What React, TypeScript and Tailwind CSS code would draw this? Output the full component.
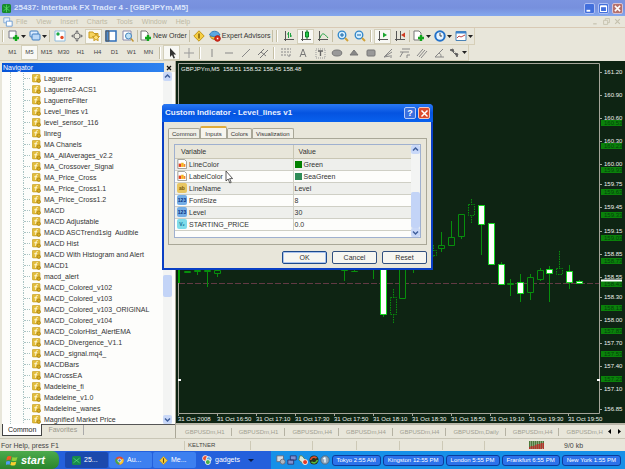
import type { ReactNode } from 'react';

const indicators = [
    'Laguerre', 'Laguerre2-ACS1', 'LaguerreFilter', 'Level_lines v1', 'level_sensor_116', 'linreg', 'MA Chanels',
    'MA_AllAverages_v2.2', 'MA_Crossover_Signal', 'MA_Price_Cross', 'MA_Price_Cross1.1', 'MA_Price_Cross1.2', 'MACD',
    'MACD Adjustable', 'MACD ASCTrend1sig  Audible', 'MACD Hist', 'MACD With Histogram and Alert', 'MACD1', 'macd_alert',
    'MACD_Colored_v102', 'MACD_Colored_v103', 'MACD_Colored_v103_ORIGINAL', 'MACD_Colored_v104', 'MACD_ColorHist_AlertEMA',
    'MACD_Divergence_V1.1', 'MACD_signal.mq4_', 'MACDBars', 'MACrossEA', 'Madeleine_fi', 'Madeleine_v1.0', 'Madeleine_wanes',
    'Magnified Market Price',
];

const inputs = [
    { name: 'LineColor', value: 'Green', type: 'color', swatch: 'bg-[#008000]' },
    { name: 'LabelColor', value: 'SeaGreen', type: 'color', swatch: 'bg-[#2e8b57]' },
    { name: 'LineName', value: 'Level', type: 'ab' },
    { name: 'FontSize', value: '8', type: '123' },
    { name: 'Level', value: '30', type: '123' },
    { name: 'STARTING_PRICE', value: '0.0', type: 'v2' },
];

const prices: [string, number][] = [
    ['161.20', 11], ['160.90', 34], ['160.60', 57], ['160.30', 80], ['160.00', 103], ['159.75', 123], ['159.45', 146], ['159.15', 170],
    ['158.85', 193], ['158.55', 216], ['158.30', 236], ['158.00', 259], ['157.70', 282], ['157.40', 305], ['157.10', 328], ['156.85', 348],
];

const levels: [string, number][] = [
    ['160.53', 62], ['160.23', 85], ['159.93', 109], ['159.63', 131], ['159.33', 154], ['159.03', 177],
    ['158.73', 200], ['158.43', 223], ['158.13', 247], ['157.83', 270], ['157.53', 293], ['157.23', 318],
];

const times = ['2008', '16:50', '17:10', '17:30', '17:50', '18:10', '18:30', '18:50', '19:10', '19:30', '19:50'];

// x, high, low, body top, body bottom, kind
type Candle = [number, number, number, number, number, 'up' | 'down' | 'dash'];
const candles: Candle[] = [
    [11, 211, 211, 210, 211, 'up'], [21, 205, 214, 209, 210, 'up'], [31, 205, 226, 209, 210, 'up'], [41, 205, 216, 209, 212, 'up'],
    [168, 205, 220, 209, 209, 'up'], [178, 205, 210, 210, 210, 'up'], [197, 205, 218, 205, 205, 'up'],
    [207, 200, 256, 205, 253, 'down'], [217, 228, 263, 236, 253, 'dash'], [226, 200, 237, 205, 237, 'up'], [237, 200, 212, 205, 205, 'up'],
    [257, 184, 196, 189, 194, 'dash'], [265, 171, 191, 184, 187, 'up'], [275, 160, 184, 176, 184, 'up'], [285, 153, 178, 153, 175, 'up'],
    [295, 138, 162, 143, 154, 'dash'], [305, 144, 194, 144, 163, 'down'], [315, 162, 203, 162, 203, 'down'],
    [325, 201, 224, 203, 223, 'down'], [334, 218, 235, 222, 223, 'up'], [344, 213, 241, 221, 232, 'down'],
    [354, 213, 239, 216, 231, 'up'], [364, 207, 220, 209, 218, 'up'], [373, 205, 241, 208, 212, 'down'],
    [383, 190, 213, 207, 213, 'dash'], [393, 204, 228, 210, 221, 'down'], [403, 219, 223, 220, 222, 'down'],
];

const clocks = ['Tokyo 2:55 AM', 'Kingston 12:55 PM', 'London 5:55 PM', 'Frankfurt 6:55 PM', 'New York 1:55 PM'];

function Icon({ children, className = 'size-[12px]' }: { children: ReactNode; className?: string }) {
    return <svg viewBox="0 0 12 12" fill="none" stroke="#555" className={`${className} shrink-0`} aria-hidden="true">{children}</svg>;
}

function Tool({ label, pressed, caret, children }: { label: string; pressed?: boolean; caret?: boolean; children: ReactNode }) {
    return (
        <button aria-label={label} className={`flex h-[15px] shrink-0 items-center justify-center ${caret ? 'w-[21px] gap-px' : 'w-[17px]'} ${pressed ? 'border border-[#d3cfba] bg-[#f8f8f4]' : ''}`}>
            <Icon>{children}</Icon>
            {caret && <svg viewBox="0 0 5 3" className="h-[3px] w-[5px]"><path d="M0 0h5L2.500 3z" fill="#222" /></svg>}
        </button>
    );
}

const Sep = () => <span className="mx-px h-3 w-px shrink-0 bg-[#c5bfa5]" />;
const Grip = () => <span className="mx-[2px] h-3 w-[2px] shrink-0 border-l border-[#c5bfa5] bg-white" />;

const plus = <path d="M8 5v6M5 8h6" stroke="#12a51c" strokeWidth="2.400" />;
const axes = <path d="M2.500 1v10M1 9.500h10" stroke="#555" />;

function IndicatorIcon() {
    return (
        <Icon className="size-[9px]">
            <rect x="0.500" y="0.500" width="10" height="10" rx="1" fill="#e3bd3c" stroke="#c79f22" />
            <path d="M7.500 2C5 1.500 5.500 5 4.500 9M3 5h4" stroke="#fffbe0" strokeWidth="1.300" />
            <circle cx="9" cy="9" r="2.300" fill="#d9ad22" stroke="#a67f10" />
        </Icon>
    );
}

function VarIcon({ type }: { type: string }) {
    if (type === 'color') {
        return (
            <Icon className="size-[10px]">
                <path d="M1 .5h8l2.500 2.500v8.500H1z" fill="#fff" stroke="#8c8c84" />
                <path d="M2 5.500h3v4H2z" fill="#e33f22" stroke="none" /><path d="M5 4.500h3v5H5z" fill="#f4b51d" stroke="none" /><path d="M8 6h2v3.500H8z" fill="#f4862d" stroke="none" />
            </Icon>
        );
    }
    const box = type === 'ab' ? 'bg-[#e8c662] text-[#765607]' : type === '123' ? 'bg-[#75aee6] text-[#0c2f7d]' : 'bg-[#7fdcea] text-[#136f93]';
    return <span className={`flex size-[10px] shrink-0 items-center justify-center rounded-[2px] text-[5px] leading-none font-bold ${box}`}>{type === 'v2' ? 'V₂' : type}</span>;
}

function Chevron({ up }: { up?: boolean }) {
    return <svg viewBox="0 0 9 9" className="size-[9px]" fill="none" stroke="#40609c" strokeWidth="1.500"><path d={up ? 'M2 5.500 4.500 3 7 5.500' : 'M2 3.500 4.500 6 7 3.500'} /></svg>;
}

function ScrollBar({ thumb }: { thumb: string }) {
    return (
        <div className="flex w-[9px] shrink-0 flex-col bg-[#f3f4f3]">
            <button aria-label="Scroll up" className="rounded-[2px] bg-[#c9d8f8]"><Chevron up /></button>
            <div className="flex flex-1 flex-col"><span className={thumb} /></div>
            <button aria-label="Scroll down" className="rounded-[2px] bg-[#c9d8f8]"><Chevron /></button>
        </div>
    );
}

function TitleBar() {
    return (
        <header className="flex h-4 shrink-0 items-center gap-[3px] bg-linear-to-b from-[#7b94e0] via-[#7790dd] to-[#84a8ee] px-[2px]">
            <Icon className="size-[9px]"><rect width="12" height="12" rx="2" fill="#178a2d" stroke="none" /><path d="m2 3 8 6M2 9l8-6M6 1v10" stroke="#58df69" /></Icon>
            <h1 className="flex-1 text-[8px] leading-none font-bold whitespace-nowrap text-[#dbe5fb]">25437: Interbank FX Trader 4 - [GBPJPYm,M5]</h1>
            <div className="flex gap-[3px]">
                <button aria-label="Minimize" className="size-[11px] rounded-[2px] border border-[#aebff3] bg-[#426fdc]"><Icon className="size-[9px]"><path d="M2 9h5" stroke="#fff" strokeWidth="2.500" /></Icon></button>
                <button aria-label="Maximize" className="size-[11px] rounded-[2px] border border-[#aebff3] bg-[#426fdc]"><Icon className="size-[9px]"><path d="M2 3h8v7H2z" stroke="#fff" strokeWidth="1.500" /><path d="M2 3h8" stroke="#fff" strokeWidth="2.500" /></Icon></button>
                <button aria-label="Close" className="size-[11px] rounded-[2px] border border-[#d9c3d3] bg-[#b5716c]"><Icon className="size-[9px]"><path d="m2.500 2.500 7 7m0-7-7 7" stroke="#fff" strokeWidth="2" /></Icon></button>
            </div>
        </header>
    );
}

function MenuBar() {
    return (
        <nav className="flex h-3 shrink-0 items-center gap-[9px] border-b border-[#d8c9b4] pr-1 pl-[3px] text-[7px] leading-none text-[#bdb9a4]">
            <Icon className="-mr-[6px] size-[10px]"><path d="M1 1h7v6H1z" fill="#eaf3ff" stroke="#7ba4d4" /><path d="M4 5h7v6H4z" fill="#fff" stroke="#5d93cf" /></Icon>
            {['File', 'View', 'Insert', 'Charts', 'Tools', 'Window', 'Help'].map(m => <button key={m}>{m}</button>)}
            <div className="ml-auto flex gap-1 text-[#c9c5b0]">
                <button aria-label="Minimize chart"><Icon className="size-[7px]"><path d="M2 10h6" stroke="#c5c1ae" strokeWidth="2" /></Icon></button>
                <button aria-label="Restore chart"><Icon className="size-[7px]"><path d="M1 4h7v7H1zM4 4V1h7v7H8" stroke="#c5c1ae" strokeWidth="1.500" /></Icon></button>
                <button aria-label="Close chart"><Icon className="size-[7px]"><path d="m2 2 8 8m0-8-8 8" stroke="#c5c1ae" strokeWidth="2" /></Icon></button>
            </div>
        </nav>
    );
}

function StandardBar() {
    return (
        <div className="flex h-[17px] shrink-0 items-center self-start border-r border-b border-[#d6cfb8] text-[7px]">
            <Grip />
            <Tool label="New chart" caret><path d="M1 1h7v7H1z" fill="#fff" stroke="#778" />{plus}</Tool>
            <Tool label="Profiles" caret><rect x="1" y="1" width="8" height="6" rx="1" fill="#dcecff" stroke="#3f7dc0" /><rect x="3" y="4" width="8" height="6" rx="1" fill="#bcd8f6" stroke="#3f7dc0" /></Tool>
            <Sep />
            <Tool label="Market watch"><path d="M1 1h10v10H1z" fill="#fff" stroke="#8ebadc" /><circle cx="4" cy="4" r="1.700" fill="#1ba845" stroke="none" /><circle cx="8" cy="7.500" r="1.700" fill="#e64b25" stroke="none" /></Tool>
            <Tool label="Data window"><path d="M6 0 4 2.500h4zM6 12l-2-2.500h4zM0 6l2.500-2v4zM12 6 9.500 4v4z" fill="#777" stroke="none" /><circle cx="6" cy="6" r="3" stroke="#777" /></Tool>
            <Tool label="Navigator" pressed><path d="M1 2h4l1 1.500h4V8H1z" fill="#f6d460" stroke="#c99a20" /><path d="m8 4 1.200 2.200 2.300.3-1.700 1.700.4 2.400L8 9.500l-2.200 1.100.4-2.400-1.700-1.700 2.300-.3z" fill="#ffe178" stroke="#c99a20" /></Tool>
            <Tool label="Terminal"><path d="M1 1h10v10H1z" fill="#fff" stroke="#2f6fb9" strokeWidth="1.500" /><path d="M1 1h3v10H1z" fill="#4b8bd0" /></Tool>
            <Tool label="Strategy tester"><path d="M1 1h8v9H1z" fill="#fff" stroke="#88a" /><circle cx="6.500" cy="6" r="3" fill="#bfe1f7" stroke="#4583ba" /><path d="m9 8.500 2.500 3" stroke="#c29531" strokeWidth="1.500" /></Tool>
            <Sep />
            <button className="flex h-[15px] items-center gap-px px-px whitespace-nowrap text-[#333]"><Icon><path d="M1 1h5l2 2v7H1z" fill="#fff" stroke="#777" />{plus}</Icon>New Order</button>
            <Sep />
            <Tool label="MetaEditor"><path d="m6 .8 5.200 5.200L6 11.200.8 6z" fill="#f7cf43" stroke="#c29517" /><path d="M6 3.500v5" stroke="#6d4e00" strokeWidth="1.300" /></Tool>
            <button className="flex h-[15px] items-center gap-px px-px whitespace-nowrap text-[#333]"><Icon><path d="M1 6c1 4 8 5 9 0z" fill="#efc33c" stroke="#ae8122" /><path d="M.5 5C2 0 9 0 11 5 8 7 3 7 .5 5z" fill="#5aa7e0" stroke="#347db9" /><circle cx="8.500" cy="8.500" r="2.800" fill="#da2c1c" stroke="#b41c10" /><path d="M7.800 7.800h1.500v1.500H7.800z" fill="#fff" stroke="none" /></Icon>Expert Advisors</button>
            <Sep />
            <Grip />
            <Tool label="Bar chart">{axes}<path d="M5.500 2v6m0-4H4m3.500 3V3M7.500 6H9" stroke="#21a243" /></Tool>
            <Tool label="Candlesticks" pressed>{axes}<path d="M7 0v9" stroke="#0b7c24" /><path d="M5.500 2h3v5h-3z" fill="#24c94a" stroke="#0b7c24" /></Tool>
            <Tool label="Line chart">{axes}<path d="M3 8c2-6 4-5 8 0" stroke="#21a243" /></Tool>
            <Sep />
            <Tool label="Zoom in"><circle cx="5" cy="5" r="3.800" fill="#d5efff" stroke="#2f85c9" strokeWidth="1.300" /><path d="M3 5h4M5 3v4" stroke="#1764a5" /><path d="m8 8 3 3" stroke="#d0a23a" strokeWidth="2" /></Tool>
            <Tool label="Zoom out"><circle cx="5" cy="5" r="3.800" fill="#d5efff" stroke="#2f85c9" strokeWidth="1.300" /><path d="M3 5h4" stroke="#1764a5" /><path d="m8 8 3 3" stroke="#d0a23a" strokeWidth="2" /></Tool>
            <Grip />
            <Tool label="Auto scroll" pressed>{axes}<path d="m6 2.500 4 2.500-4 2.500z" fill="#18a52e" stroke="none" /></Tool>
            <Tool label="Chart shift">{axes}<path d="M6.500 1v8" /><path d="m11 2.500-4 2.500 4 2.500z" fill="#cf3a20" stroke="none" /></Tool>
            <Sep />
            <Tool label="Indicators" caret><path d="M1 1h5l2 2v7H1z" fill="#fff" stroke="#777" />{plus}</Tool>
            <Tool label="Periods" caret><circle cx="6" cy="6" r="4.700" fill="#e8f4ff" stroke="#2372c9" strokeWidth="2" /><path d="M6 3v3h2" stroke="#444" /></Tool>
            <Tool label="Templates" caret><path d="M1 1.500h10v9H1z" fill="#fff" stroke="#4a83b6" /><path d="M1 2.500h10" stroke="#3b83cd" strokeWidth="2" /><path d="m2 8 2-2 2 1 4-2" stroke="#b44" /></Tool>
        </div>
    );
}

function DrawingBar() {
    return (
        <div className="flex h-4 shrink-0 items-center self-start border-r border-b border-[#d6cfb8]">
            {['M1', 'M5', 'M15', 'M30', 'H1', 'H4', 'D1', 'W1', 'MN'].map((p, i) => (
                <button key={p} className={`h-[15px] w-[17px] text-[6px] text-[#444] ${i === 0 ? 'ml-1' : ''} ${p === 'M5' ? 'border border-[#d3cfba] bg-[#f8f8f4]' : ''}`}>{p}</button>
            ))}
            <Grip />
            <Tool label="Cursor" pressed><path d="M4 1v9l2-2 1.500 3.500L9 11 7.500 7.500h2.700z" fill="#333" stroke="none" /></Tool>
            <Tool label="Crosshair"><path d="M6 1v10M1 6h10" stroke="#999" /></Tool>
            <Grip />
            <Tool label="Vertical line"><path d="M6 2v8" stroke="#888" /></Tool>
            <Tool label="Horizontal line"><path d="M2 6h8" stroke="#888" /></Tool>
            <Tool label="Trendline"><path d="m2 10 8-8" stroke="#888" /></Tool>
            <Tool label="Channel"><path d="m1 8 6-6M3 11l8-8M4 5l5 4" stroke="#777" /></Tool>
            <Grip />
            <Tool label="Fibonacci"><path d="M1 2h10M1 5h10M1 8h7M9 8v3M9 8h2" stroke="#888" strokeDasharray="2 1" /></Tool>
            <Tool label="Text"><path d="M3 10 6 2l3 8M4 7.500h4" stroke="#777" /></Tool>
            <Tool label="Text label"><path d="M2 2h9v9H2z" stroke="#999" strokeDasharray="1 1" /><path d="M4 4h5M6.500 4v5" stroke="#666" strokeWidth="1.300" /></Tool>
            <Tool label="Ellipse"><ellipse cx="6" cy="6" rx="4.800" ry="3" fill="#999" stroke="#777" /></Tool>
            <Tool label="Triangle"><path d="m6 3 4 5H2z" fill="#888" stroke="#777" /></Tool>
            <Tool label="Rectangle"><rect x="2" y="3" width="8" height="6" rx="1" fill="#999" stroke="#777" /></Tool>
            <Tool label="Fibonacci fan"><path d="m2 10 8-8M2 10l8-5M2 10l6-1M9 8v3" stroke="#888" /></Tool>
            <Tool label="Expansion"><path d="M3 2h8M1 5h9M1 10l3-5M8 8h3M8 8v3" stroke="#888" /></Tool>
            <Tool label="Pitchfork"><path d="m1 9 6-7M3 10l6-7M5 11l6-7" stroke="#888" /></Tool>
            <Tool label="Angle"><path d="m10 2-8 8h9M6 6c2 1 2 2 2 4" stroke="#888" /></Tool>
            <Tool label="Arrows" caret><path d="m1 3 3-1 1 3zM6 6l3 1-1 3zM4 5l3 3" fill="#555" stroke="#666" /></Tool>
        </div>
    );
}

function Navigator() {
    return (
        <aside className="flex w-[176px] shrink-0 flex-col border-r border-[#aaa797] pt-[2px] pl-[2px]">
            <div className="flex h-[9px] shrink-0 items-center pr-[2px]">
                <h2 className="h-[9px] flex-1 bg-linear-to-r from-[#0754d8] to-[#2e82ef] pl-px text-[7px] leading-[9px] text-white">Navigator</h2>
                <button aria-label="Close navigator" className="flex w-[9px] justify-center"><Icon className="size-[6px]"><path d="m2 2 8 8m0-8-8 8" stroke="#111" strokeWidth="2.500" /></Icon></button>
            </div>
            <div className="flex min-h-0 flex-1 bg-[#fdfdfb]">
                <ul className="ml-[8px] flex-1 overflow-hidden border-l border-dotted border-[#a9c3c3] pt-px">
                    {indicators.map(name => (
                        <li key={name} className="ml-3 flex h-[11px] items-center border-l border-dotted border-[#a9c3c3] text-[7px] leading-[11px] whitespace-pre text-[#333]">
                            <span className="mr-[2px] w-[6px] border-t border-dotted border-[#a9c3c3]" />
                            <IndicatorIcon />
                            <span className="ml-[3px]">{name}</span>
                        </li>
                    ))}
                </ul>
                <ScrollBar thumb="mt-[194px] h-[22px] rounded-[2px] bg-[#c3d4f7]" />
                <span className="w-[3px]" />
            </div>
            <div className="flex h-[14px] shrink-0 items-start border-t border-[#555] text-[7px] leading-[10px]">
                <button className="-mt-px h-[12px] border border-t-0 border-[#444] bg-white px-[5px] text-[#222]">Common</button>
                <button className="border-r border-[#aaa] px-[6px] text-[#9a988c]">Favorites</button>
            </div>
        </aside>
    );
}

function PriceChart() {
    return (
        <svg viewBox="0 0 449 362" preserveAspectRatio="xMaxYMin meet" className="min-h-0 w-full flex-1 bg-[#0e2413] font-['Liberation_Sans',sans-serif] text-[6px]" role="img" aria-label="GBPJPYm five minute candlestick chart">
            <path d="M2.500 352.500V2.500h421v350z" fill="none" stroke="#a5a59a" />
            <text x="5" y="10" fill="#eef2ee" className="whitespace-pre">GBPJPYm,M5  158.51 158.52 158.45 158.48</text>
            <path d="M3 222.500h420" stroke="#623a44" strokeDasharray="6 2" />
            <path d="M3 208v14" stroke="#00a000" strokeWidth="2" />
            {candles.map(([x, hi, lo, top, bottom, kind]) => (
                <g key={x} stroke={kind === 'down' ? '#12d81e' : '#078f0c'} strokeDasharray={kind === 'dash' ? '1.500 1' : undefined}>
                    <path d={`M${x + 0.5} ${hi}V${lo}`} stroke="#078f0c" />
                    <path d={`M${x - 2.5} ${top + 0.5}h6V${bottom + 0.5}h-6z`} fill={kind === 'down' ? '#fff' : '#0e2413'} />
                </g>
            ))}
            <path d="M2 318h3v2H2zM421 318h3v2h-3z" fill="#fff" />
            {times.map((t, i) => (
                <g key={t}>
                    <path d={`M${2.5 + i * 39} 353v2`} stroke="#a5a59a" />
                    <text x={2 + i * 39} y="360" fill="#eef2ee">31 Oct {t}</text>
                </g>
            ))}
            {prices.map(([p, y]) => (
                <g key={p}>
                    <path d={`M424 ${y + 0.5}h2`} stroke="#a5a59a" />
                    <text x="428" y={y + 2} fill="#eef2ee">{p}</text>
                </g>
            ))}
            {levels.map(([p, y]) => (
                <g key={p}>
                    <path d={`M425 ${y - 3}h21v6h-21z`} fill="#0a820a" />
                    <text x="428" y={y + 2} fill="#04400a">{p}</text>
                </g>
            ))}
            <path d="M425 219.500h21" stroke="#fff" strokeWidth="2" />
        </svg>
    );
}

function Dialog() {
    return (
        <section role="dialog" aria-label="Custom Indicator - Level_lines v1" className="absolute top-[43px] left-[162px] flex h-[166px] w-[271px] flex-col rounded-t-[4px] border-2 border-t-0 border-[#0a3fc4] bg-[#e8e6da]">
            <header className="-mx-[2px] flex h-[18px] shrink-0 items-center gap-[2px] rounded-t-[4px] bg-linear-to-b from-[#2878f4] via-[#0553e0] to-[#0961ee] px-[3px]">
                <h2 className="flex-1 text-[8px] leading-none font-bold text-[#e8f0ff]">Custom Indicator - Level_lines v1</h2>
                <button aria-label="Help" className="flex size-3 items-center justify-center rounded-[2px] border border-[#b7cbf7] bg-[#3a6fe0] text-[9px] leading-none font-bold text-white">?</button>
                <button aria-label="Close dialog" className="flex size-3 items-center justify-center rounded-[2px] border border-[#f3c7bd] bg-[#dc4a2c]"><Icon className="size-[9px]"><path d="m2 2 8 8m0-8-8 8" stroke="#fff" strokeWidth="2" /></Icon></button>
            </header>
            <div className="flex flex-1 flex-col px-[4px] pt-1 pb-[4px] text-[7px] leading-none text-[#333]">
                <div role="tablist" className="flex items-end text-[6px]">
                    {['Common', 'Inputs', 'Colors', 'Visualization'].map(t => (
                        <button key={t} role="tab" aria-selected={t === 'Inputs'} className={t === 'Inputs'
                            ? '-mb-px h-[13px] rounded-t-[2px] border border-t-2 border-b-0 border-[#a9a797] border-t-[#dfab3b] bg-[#f6f5ee] px-[4px]'
                            : 'h-[10px] rounded-t-[2px] border border-b-0 border-[#a9a797] bg-[#efeee5] px-[3px]'}>{t}</button>
                    ))}
                </div>
                <div className="flex h-[107px] flex-col border border-[#a9a797] px-[5px] pt-[5px] pb-[6px]">
                    <div className="flex flex-1 border border-[#9fb0cf] bg-[#fdfdfb]">
                        <div className="flex-1">
                            <table className="w-full table-fixed border-collapse text-left">
                                <thead>
                                    <tr className="h-[13px] bg-[#e8e6da]">
                                        <th className="w-[118px] border-r border-b border-[#c9c6b4] pl-[6px] font-normal">Variable</th>
                                        <th className="border-b border-[#c9c6b4] pl-[5px] font-normal">Value</th>
                                    </tr>
                                </thead>
                                <tbody>
                                    {inputs.map((v, i) => (
                                        <tr key={v.name} className={`h-[12px] ${i % 2 === 0 ? 'bg-[#eeefec]' : ''}`}>
                                            <td className="border-r border-b border-[#cfcfc5] p-0"><div className="flex items-center gap-[2px] pl-[2px]"><VarIcon type={v.type} />{v.name}</div></td>
                                            <td className="border-b border-[#cfcfc5] p-0"><div className="flex items-center gap-[2px] pl-[1px]">{v.swatch && <span className={`size-[7px] ${v.swatch}`} />}{v.value}</div></td>
                                        </tr>
                                    ))}
                                </tbody>
                            </table>
                        </div>
                        <ScrollBar thumb="mt-auto h-[36px] rounded-[2px] bg-[#c3d4f7]" />
                    </div>
                </div>
                <div className="mt-auto flex justify-end gap-[5px]">
                    <button className="h-[13px] w-[45px] rounded-[2px] border border-[#1c4a8c] bg-[#f6f6f1] ring-1 ring-[#a9c3ee] ring-inset">OK</button>
                    <button className="h-[13px] w-[45px] rounded-[2px] border border-[#31507f] bg-[#f6f6f1]">Cancel</button>
                    <button className="h-[13px] w-[45px] rounded-[2px] border border-[#31507f] bg-[#f6f6f1]">Reset</button>
                </div>
            </div>
            <svg viewBox="0 0 8 14" className="absolute top-[66px] left-[61px] h-[14px] w-2"><path d="M1 1v10l2.200-2 1.600 4 1.400-.6-1.600-3.800h3z" fill="#fff" stroke="#333" strokeWidth="0.800" /></svg>
        </section>
    );
}

function Taskbar() {
    return (
        <footer className="flex h-[18px] shrink-0 items-center bg-[#2460dc] text-[7px] text-white">
            <button className="mr-[6px] flex h-full w-[59px] items-center gap-[3px] rounded-r-[7px] bg-linear-to-b from-[#4cab4c] to-[#2a852c] pl-[6px] text-[11px] leading-none font-bold italic">
                <Icon className="size-[12px]"><path d="M1 3c2-1.500 3-1 4.500-.5l-1 3.500C3 5.500 2 5.500.3 6.500z" fill="#f25a26" stroke="none" /><path d="M6.500 3c2 1 3 .5 5 0l-1 3.500c-2 1-3 .5-5 0z" fill="#8ed13b" stroke="none" /><path d="M.2 7.500c2-1 3-.5 4.200 0l-1 3.500c-1-.5-2-.7-4 .3z" fill="#4f9bf1" stroke="none" /><path d="M5.300 7.700c2 .8 3 .5 5 0l-1 3.300c-2 1-3 .5-5 0z" fill="#fbce31" stroke="none" /></Icon>
                start
            </button>
            <button className="flex h-4 w-[43px] items-center gap-[3px] rounded-[2px] bg-[#1b49ad] pl-[7px]"><Icon className="size-[9px]"><rect width="12" height="12" rx="2" fill="#178a4d" stroke="none" /><path d="m2 3 8 6M2 9l8-6" stroke="#58df79" /></Icon>25...</button>
            <button className="ml-px flex h-4 w-[43px] items-center gap-[3px] rounded-[2px] bg-[#3d80f0] pl-[6px]"><Icon className="size-[9px]"><circle cx="6" cy="6" r="5.500" fill="#e34a35" stroke="none" /><path d="M6 6 1.200 3.200A5.500 5.500 0 0 0 6 11.500z" fill="#43a84b" stroke="none" /><path d="M6 6v5.500A5.500 5.500 0 0 0 10.800 3.300z" fill="#f6c92f" stroke="none" /><circle cx="6" cy="6" r="2.200" fill="#3f7de0" stroke="#fff" /></Icon>Au...</button>
            <button className="ml-px flex h-4 w-[43px] items-center gap-[3px] rounded-[2px] bg-[#3d80f0] pl-[6px]"><Icon className="size-[9px]"><path d="m6 .8 5.200 5.200L6 11.200.8 6z" fill="#f7cf43" stroke="#c29517" /><path d="M6 3v6" stroke="#6d4e00" strokeWidth="1.500" /></Icon>Me...</button>
            <button className="ml-[6px] flex h-4 items-center gap-[3px]"><Icon className="size-[10px]"><circle cx="4" cy="4" r="3.300" fill="#e9502f" stroke="#fff" /><circle cx="8" cy="5" r="3" fill="#58a9ef" stroke="#fff" /><circle cx="7" cy="8.500" r="3" fill="#48b04a" stroke="#fff" /></Icon>gadgets</button>
            <svg viewBox="0 0 6 3" className="ml-[8px] h-[3px] w-[6px] shrink-0"><path d="M0 0h6L3 3z" fill="#0a1c4a" /></svg>
            <div className="ml-auto flex h-full items-center gap-[2px] bg-[#1690e8] pr-1 pl-[5px] text-[6px]">
                <div className="flex gap-px">
                    <Icon className="size-[10px]"><path d="M1 1h8v7H1z" fill="#d8dce0" stroke="#667" /><circle cx="8" cy="8" r="3" fill="#aeb6bf" stroke="#667" /></Icon>
                    <Icon className="size-[10px]"><path d="M4 1h7v5H4zM1 6h7v5H1z" fill="#7f90cf" stroke="#26336d" /></Icon>
                    <Icon className="size-[10px]"><path d="M2 1h3l4 5-3 4-5-4z" fill="#d9e8d8" stroke="#4d7d4d" /><circle cx="8.500" cy="8.500" r="3" fill="#e23b25" stroke="#fff" /></Icon>
                    <Icon className="size-[10px]"><circle cx="6" cy="6" r="5.500" fill="#26331c" stroke="none" /><path d="M2 6a4 4 0 0 1 7-2" stroke="#e34e2f" strokeWidth="2" /><path d="M10 6a4 4 0 0 1-7 2" stroke="#58b83b" strokeWidth="2" /></Icon>
                    <Icon className="size-[10px]"><circle cx="6" cy="6" r="5" fill="#8fa6bb" stroke="#4c647c" /><path d="M6 3v6M4 5l2-2" stroke="#fff" strokeWidth="1.500" /></Icon>
                </div>
                {clocks.map(c => <span key={c} className="flex h-[11px] items-center rounded-[3px] border border-[#0b3c9c] bg-[#2c72ea] px-[4px] whitespace-nowrap">{c}</span>)}
            </div>
        </footer>
    );
}

export default function App() {
    return (
        <div className="flex h-screen flex-col overflow-hidden bg-[#e8e6da] font-['Liberation_Sans',Arial,sans-serif]">
            <TitleBar />
            <MenuBar />
            <StandardBar />
            <DrawingBar />
            <main className="relative flex min-h-0 flex-1">
                <Navigator />
                <div className="flex min-w-0 flex-1 flex-col">
                    <PriceChart />
                    <div className="flex h-[15px] shrink-0 items-center border-t-2 border-[#b9b6a8] text-[6px] text-[#a19f92]">
                        <div className="flex min-w-0 flex-1 gap-px overflow-hidden pl-[3px] whitespace-nowrap">
                            {['H1', 'H1', 'H4', 'H4', 'H4', 'Daily', 'H4', 'H'].map((p, i) => <button key={i} className="shrink-0 border-r border-[#b5b2a3] px-[6px] leading-[8px] last:border-r-0 last:pr-0">GBPUSDm,{p}</button>)}
                        </div>
                        <button aria-label="Previous tabs" className="flex w-[9px] justify-center"><svg viewBox="0 0 3 5" className="h-[5px] w-[3px]"><path d="M3 0v5L0 2.500z" /></svg></button>
                        <button aria-label="Next tabs" className="flex w-[11px] justify-center"><svg viewBox="0 0 3 5" className="h-[5px] w-[3px]"><path d="M0 0v5l3-2.500z" /></svg></button>
                    </div>
                </div>
                <Dialog />
            </main>
            <div className="flex h-[13px] shrink-0 items-center border-t border-[#c9c6b6] text-[7px] leading-[9px] text-[#444]">
                <span className="w-[185px] border-r border-[#cdc9b6] pl-px">For Help, press F1</span>
                <span className="w-[66px] border-r border-[#cdc9b6] pl-[3px] text-[6px]">KELTNER</span>
                <span className="h-[9px] w-[62px] border-r border-[#cdc9b6]" />
                <span className="h-[9px] w-[44px] border-r border-[#cdc9b6]" />
                <span className="h-[9px] w-[43px] border-r border-[#cdc9b6]" />
                <span className="h-[9px] w-[43px] border-r border-[#cdc9b6]" />
                <span className="h-[9px] w-[42px] border-r border-[#cdc9b6]" />
                <span className="flex-1" />
                <svg viewBox="0 0 15 8" className="mr-[20px] h-2 w-[15px]" strokeWidth="1.600"><path d="M.5 0v8m2-8v8m2-8v8m2-8v8m2-8v8m2-8v8m2-8v8m2-8v8" stroke="#4d7a3b" /><path d="M.5 6v2m2-3v3m2-3v3m2-4v4m2-5v5m2-5v5m2-6v6m2-6v6" stroke="#b3342b" /></svg>
                <span className="w-[61px]">9/0 kb</span>
            </div>
            <Taskbar />
        </div>
    );
}
